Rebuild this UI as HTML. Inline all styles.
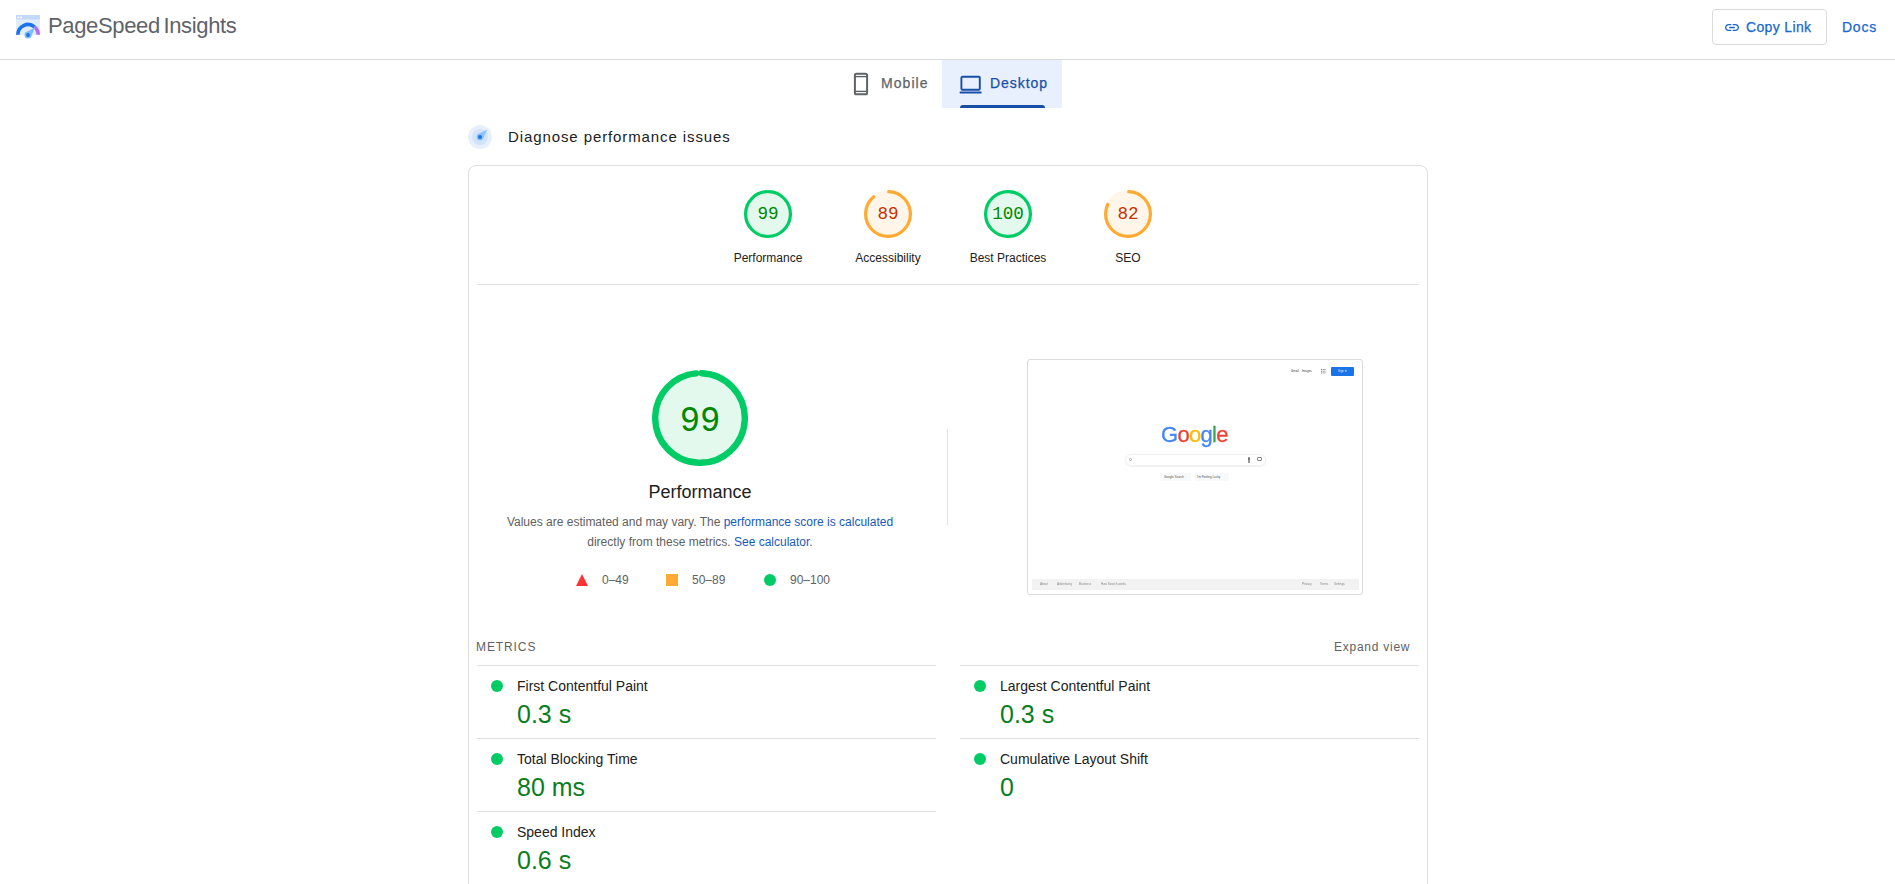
<!DOCTYPE html>
<html><head><meta charset="utf-8">
<style>
*{box-sizing:border-box}
html,body{margin:0;padding:0;background:#fff;width:1895px;height:884px;overflow:hidden;font-family:"Liberation Sans",sans-serif}
.a{position:absolute;white-space:nowrap}
#hdr{position:absolute;left:0;top:0;width:1895px;height:60px;border-bottom:1px solid #dadada}
.ttl{left:48px;top:14px;font-size:22px;line-height:24px;color:#5f6368;letter-spacing:-0.35px;word-spacing:-2.2px}
.btn{left:1712px;top:9px;width:115px;height:36px;border:1px solid #dadada;border-radius:4px}
.blue{color:#1967d2}
.tab{font-size:14px;line-height:20px;-webkit-text-stroke:0.25px currentColor}
.card{left:468px;top:165px;width:960px;height:740px;border:1px solid #dedede;border-radius:8px}
.glab{font-size:12px;line-height:16px;color:#212121;text-align:center;width:120px}
.gnum{font-family:"Liberation Mono",monospace;text-align:center;transform-origin:50% 50%}
.desc{font-size:12px;line-height:20px;color:#616161;text-align:center}
.lnk{color:#185abc}
.mt{font-size:14px;line-height:20px;color:#212121}
.mv{font-size:25px;line-height:28px;color:#0a7d1e}
.dot{width:12px;height:12px;border-radius:50%;background:#0c6}
.hr{height:1px;background:#e0e0e0}
</style></head><body>
<div id="hdr"></div>
<!-- logo -->
<svg class="a" style="left:16px;top:15px" width="24" height="24" viewBox="0 0 24 24">
  <rect x="0" y="0" width="24" height="20" rx="1" fill="#e2edfc"/>
  <rect x="0" y="0" width="24" height="4.6" rx="1" fill="#c3d9fb"/>
  <circle cx="2.2" cy="2.4" r="0.9" fill="#fff"/>
  <circle cx="5" cy="2.4" r="0.9" fill="#fff"/>
  <path d="M1.8 19.8 A10.2 10.2 0 0 1 18.5 11.9" fill="none" stroke="#1a73e8" stroke-width="3.6"/>
  <path d="M18.5 11.9 A10.2 10.2 0 0 1 22.2 19.8" fill="none" stroke="#b26cf5" stroke-width="3.6"/>
  <circle cx="12" cy="20" r="3.5" fill="#7cbdfa"/><path d="M19.2 12.2 L14.6 22.4 L9.5 17.6 Z" fill="#7cbdfa"/>
  <circle cx="12" cy="20" r="1.9" fill="#1a73e8"/>
</svg>
<div class="a ttl">PageSpeed Insights</div>
<div class="a btn"></div>
<svg class="a" style="left:1725px;top:23.5px" width="14" height="7" viewBox="2 7 20 10">
  <path fill="#1967d2" d="M3.9 12c0-1.71 1.39-3.1 3.1-3.1h4V7H7c-2.76 0-5 2.24-5 5s2.24 5 5 5h4v-1.9H7c-1.71 0-3.1-1.39-3.1-3.1zM8 13h8v-2H8v2zm9-6h-4v1.9h4c1.71 0 3.1 1.39 3.1 3.1s-1.39 3.1-3.1 3.1h-4V17h4c2.76 0 5-2.24 5-5s-2.24-5-5-5z"/>
</svg>
<div class="a blue tab" style="left:1746px;top:17px;letter-spacing:0.35px">Copy Link</div>
<div class="a blue tab" style="left:1842px;top:17px;letter-spacing:0.75px">Docs</div>

<!-- tabs -->
<div class="a" style="left:942px;top:60px;width:120px;height:48px;background:#e8f0fe"></div>
<div class="a" style="left:960px;top:105px;width:85px;height:3px;background:#174ea6;border-radius:3px 3px 0 0"></div>
<svg class="a" style="left:853px;top:72px" width="16" height="24" viewBox="0 0 16 24">
  <rect x="1.9" y="1.7" width="12.2" height="20.6" rx="1.6" fill="none" stroke="#5f6368" stroke-width="2"/>
  <line x1="2" y1="4.6" x2="14" y2="4.6" stroke="#5f6368" stroke-width="1.4"/>
  <line x1="2" y1="19.4" x2="14" y2="19.4" stroke="#5f6368" stroke-width="1.4"/>
</svg>
<div class="a tab" style="left:881px;top:73px;color:#5f6368;letter-spacing:1.05px">Mobile</div>
<svg class="a" style="left:959px;top:75px" width="24" height="20" viewBox="0 0 24 20">
  <rect x="2.4" y="1.8" width="18.4" height="13" rx="1" fill="none" stroke="#174ea6" stroke-width="1.9"/>
  <rect x="0.6" y="16.6" width="22" height="1.8" rx="0.6" fill="#174ea6"/>
</svg>
<div class="a tab" style="left:990px;top:73px;color:#174ea6;letter-spacing:0.95px">Desktop</div>

<!-- diagnose -->
<svg class="a" style="left:468px;top:125px" width="24" height="24" viewBox="0 0 24 24">
  <circle cx="12" cy="12" r="12" fill="#e8f0fe"/>
  <circle cx="12" cy="12" r="8" fill="#d2e3fc"/>
  <circle cx="12" cy="12" r="3.4" fill="#8ac2fb"/><path d="M19.4 4.6 L14.4 14.4 L9.6 9.6 Z" fill="#8ac2fb"/>
  <circle cx="12" cy="12" r="2" fill="#1a73e8"/>
</svg>
<div class="a" style="left:508px;top:127px;font-size:15px;line-height:20px;color:#202124;letter-spacing:0.9px">Diagnose performance issues</div>

<!-- card -->
<div class="a card"></div>

<svg class="a" style="left:744.0px;top:190.0px" width="48" height="48" viewBox="0 0 120 120">
  <circle r="56" cx="60" cy="60" stroke-width="8" fill="#0c6" stroke="#0c6" opacity="0.1"/>
  <circle r="56" cx="60" cy="60" stroke-width="8" fill="none" stroke="#0c6" stroke-linecap="round" transform="rotate(-87.9537 60 60)" stroke-dasharray="344.340 351.858"/>
</svg>
<div class="a gnum" style="left:744.0px;top:190.4px;width:48px;height:48px;line-height:48px;font-size:17.62px;color:#080;transform:scaleY(1.06)">99</div>
<div class="a glab" style="left:708px;top:250px">Performance</div>
<svg class="a" style="left:864.0px;top:190.0px" width="48" height="48" viewBox="0 0 120 120">
  <circle r="56" cx="60" cy="60" stroke-width="8" fill="#fa3" stroke="#fa3" opacity="0.1"/>
  <circle r="56" cx="60" cy="60" stroke-width="8" fill="none" stroke="#fa3" stroke-linecap="round" transform="rotate(-87.9537 60 60)" stroke-dasharray="309.154 351.858"/>
</svg>
<div class="a gnum" style="left:864.0px;top:190.4px;width:48px;height:48px;line-height:48px;font-size:17.62px;color:#c33300;transform:scaleY(1.06)">89</div>
<div class="a glab" style="left:828px;top:250px">Accessibility</div>
<svg class="a" style="left:984.0px;top:190.0px" width="48" height="48" viewBox="0 0 120 120">
  <circle r="56" cx="60" cy="60" stroke-width="8" fill="#0c6" stroke="#0c6" opacity="0.1"/>
  <circle r="56" cx="60" cy="60" stroke-width="8" fill="none" stroke="#0c6" stroke-linecap="round" transform="rotate(-87.9537 60 60)" stroke-dasharray="351.858 351.858"/>
</svg>
<div class="a gnum" style="left:984.0px;top:190.4px;width:48px;height:48px;line-height:48px;font-size:17.62px;color:#080;transform:scaleY(1.06)">100</div>
<div class="a glab" style="left:948px;top:250px">Best Practices</div>
<svg class="a" style="left:1104.0px;top:190.0px" width="48" height="48" viewBox="0 0 120 120">
  <circle r="56" cx="60" cy="60" stroke-width="8" fill="#fa3" stroke="#fa3" opacity="0.1"/>
  <circle r="56" cx="60" cy="60" stroke-width="8" fill="none" stroke="#fa3" stroke-linecap="round" transform="rotate(-87.9537 60 60)" stroke-dasharray="284.524 351.858"/>
</svg>
<div class="a gnum" style="left:1104.0px;top:190.4px;width:48px;height:48px;line-height:48px;font-size:17.62px;color:#c33300;transform:scaleY(1.06)">82</div>
<div class="a glab" style="left:1068px;top:250px">SEO</div>
<svg class="a" style="left:652.0px;top:370.0px" width="96" height="96" viewBox="0 0 120 120">
  <circle r="56" cx="60" cy="60" stroke-width="8" fill="#0c6" stroke="#0c6" opacity="0.1"/>
  <circle r="56" cx="60" cy="60" stroke-width="8" fill="none" stroke="#0c6" stroke-linecap="round" transform="rotate(-87.9537 60 60)" stroke-dasharray="344.340 351.858"/>
</svg>
<div class="a gnum" style="left:652.0px;top:372.8px;width:96px;height:96px;line-height:96px;font-size:33.94px;color:#080;transform:scaleY(1.1)">99</div>
<div class="a" style="left:600px;top:480px;width:200px;text-align:center;font-size:18px;line-height:24px;color:#212121">Performance</div>
<div class="a desc" style="left:450px;top:512px;width:500px">Values are estimated and may vary. The <span class="lnk">performance score is calculated</span></div>
<div class="a desc" style="left:450px;top:532px;width:500px">directly from these metrics. <span class="lnk">See calculator.</span></div>
<svg class="a" style="left:576px;top:574px" width="12" height="12" viewBox="0 0 12 12"><path d="M6 0 L12 12 H0 Z" fill="#f33"/></svg>
<div class="a desc" style="left:602px;top:570px">0–49</div>
<div class="a" style="left:666px;top:574px;width:12px;height:12px;background:#fa3"></div>
<div class="a desc" style="left:692px;top:570px">50–89</div>
<div class="a dot" style="left:764px;top:574px"></div>
<div class="a desc" style="left:790px;top:570px">90–100</div>
<div class="a" style="left:947px;top:429px;width:1px;height:96px;background:#e0e0e0"></div>

<div class="a hr" style="left:477px;top:284px;width:942px"></div>


<!-- screenshot -->
<div class="a" style="left:1027px;top:359px;width:336px;height:236px;border:1px solid #dadada;border-radius:3px;background:#fff;overflow:hidden">
<div class="a" style="left:0;top:0;width:334px;height:234px;filter:blur(0.25px)">
  <div class="a" style="left:263px;top:9px;font-size:3px;color:#444">Gmail</div>
  <div class="a" style="left:274px;top:9px;font-size:3px;color:#444">Images</div>
  <svg class="a" style="left:293px;top:9px" width="4.5" height="4.5" viewBox="0 0 5 5" fill="#888"><rect x="0" y="0" width="1.2" height="1.2"/><rect x="1.9" y="0" width="1.2" height="1.2"/><rect x="3.8" y="0" width="1.2" height="1.2"/><rect x="0" y="1.9" width="1.2" height="1.2"/><rect x="1.9" y="1.9" width="1.2" height="1.2"/><rect x="3.8" y="1.9" width="1.2" height="1.2"/><rect x="0" y="3.8" width="1.2" height="1.2"/><rect x="1.9" y="3.8" width="1.2" height="1.2"/><rect x="3.8" y="3.8" width="1.2" height="1.2"/></svg>
  <div class="a" style="left:303px;top:7px;width:23px;height:9px;background:#1a73e8;border-radius:1px"></div>
  <div class="a" style="left:310px;top:9px;font-size:3px;color:#dfe9fb">Sign in</div>
  <div class="a" style="left:133px;top:62px;font-size:22px;line-height:26px;letter-spacing:-0.7px;font-weight:normal;-webkit-text-stroke:0.3px currentColor"><span style="color:#4285f4">G</span><span style="color:#ea4335">o</span><span style="color:#fbbc05">o</span><span style="color:#4285f4">g</span><span style="color:#34a853">l</span><span style="color:#ea4335">e</span></div>
  <div class="a" style="left:97px;top:94px;width:141px;height:12px;border:1px solid #f0f0f0;border-radius:6px;box-shadow:0 0.5px 1px #e4e4e4"></div>
  <div class="a" style="left:101px;top:98px;width:3px;height:3px;border:1px solid #aaa;border-radius:50%"></div>
  <div class="a" style="left:220px;top:97px;width:2px;height:4px;background:#777;border-radius:1px"></div>
  <div class="a" style="left:220px;top:101px;width:2px;height:2px;background:#999"></div>
  <div class="a" style="left:229px;top:97px;width:5px;height:4px;border:1px solid #888;border-radius:1px"></div>
  <div class="a" style="left:133px;top:113px;width:30px;height:8px;background:#f8f9fa;border-radius:1px"></div>
  <div class="a" style="left:136px;top:115px;font-size:3px;color:#555">Google Search</div>
  <div class="a" style="left:167px;top:113px;width:34px;height:8px;background:#f8f9fa;border-radius:1px"></div>
  <div class="a" style="left:169px;top:115px;font-size:3px;color:#555">I'm Feeling Lucky</div>
  <div class="a" style="left:4px;top:219px;width:327px;height:11px;background:#f2f2f2"></div>
  <div class="a" style="left:12px;top:222px;font-size:3px;color:#888">About</div>
  <div class="a" style="left:29px;top:222px;font-size:3px;color:#888">Advertising</div>
  <div class="a" style="left:51px;top:222px;font-size:3px;color:#888">Business</div>
  <div class="a" style="left:73px;top:222px;font-size:3px;color:#888">How Search works</div>
  <div class="a" style="left:274px;top:222px;font-size:3px;color:#888">Privacy</div>
  <div class="a" style="left:292px;top:222px;font-size:3px;color:#888">Terms</div>
  <div class="a" style="left:306px;top:222px;font-size:3px;color:#888">Settings</div>
</div></div>

<!-- metrics -->
<div class="a" style="left:476px;top:639px;font-size:12px;line-height:16px;color:#616161;letter-spacing:0.9px">METRICS</div>
<div class="a" style="left:1334px;top:639px;font-size:12px;line-height:16px;color:#616161;letter-spacing:0.75px">Expand view</div>
<div class="a hr" style="left:477px;top:665px;width:459px"></div>
<div class="a dot" style="left:491px;top:680px"></div>
<div class="a mt" style="left:517px;top:676px">First Contentful Paint</div>
<div class="a mv" style="left:517px;top:700px">0.3 s</div>
<div class="a hr" style="left:477px;top:738px;width:459px"></div>
<div class="a dot" style="left:491px;top:753px"></div>
<div class="a mt" style="left:517px;top:749px">Total Blocking Time</div>
<div class="a mv" style="left:517px;top:773px">80 ms</div>
<div class="a hr" style="left:477px;top:811px;width:459px"></div>
<div class="a dot" style="left:491px;top:826px"></div>
<div class="a mt" style="left:517px;top:822px">Speed Index</div>
<div class="a mv" style="left:517px;top:846px">0.6 s</div>
<div class="a hr" style="left:960px;top:665px;width:459px"></div>
<div class="a dot" style="left:974px;top:680px"></div>
<div class="a mt" style="left:1000px;top:676px">Largest Contentful Paint</div>
<div class="a mv" style="left:1000px;top:700px">0.3 s</div>
<div class="a hr" style="left:960px;top:738px;width:459px"></div>
<div class="a dot" style="left:974px;top:753px"></div>
<div class="a mt" style="left:1000px;top:749px">Cumulative Layout Shift</div>
<div class="a mv" style="left:1000px;top:773px">0</div>
</body></html>
